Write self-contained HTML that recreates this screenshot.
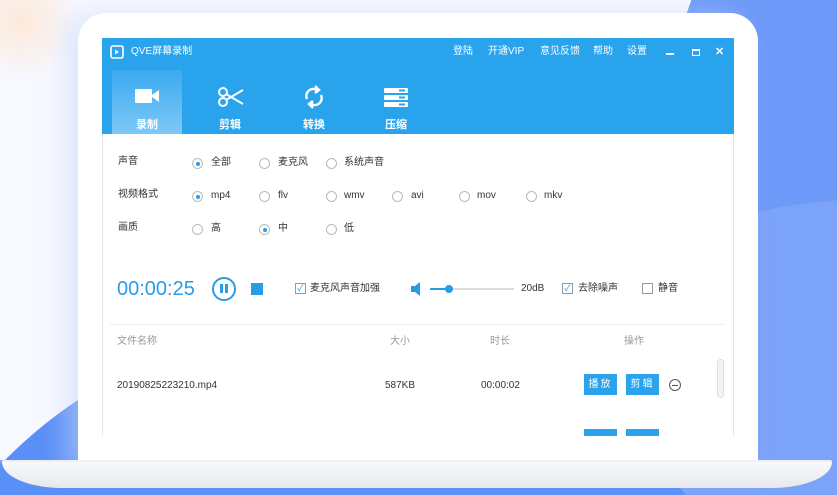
<!DOCTYPE html><html><head><meta charset="utf-8"><style>
*{margin:0;padding:0;box-sizing:border-box}
html,body{width:837px;height:495px;overflow:hidden}
body{font-family:"Liberation Sans","Noto Sans CJK SC",sans-serif}
#w{position:relative;width:837px;height:495px;overflow:hidden;background:#6d99f8}
.a{position:absolute}
.t{position:absolute;font-size:10px;color:#333;white-space:nowrap;line-height:12px}
.r{position:absolute;width:11px;height:11px;border:1px solid #bbb;border-radius:50%;background:#fff}
.r.on::after{content:"";position:absolute;left:2.5px;top:2.5px;width:4px;height:4px;border-radius:50%;background:#2a9be8}
.cb{position:absolute;width:11px;height:11px;border:1px solid #999;background:#fff;font-size:9px;line-height:9px;color:#2a9be8;text-align:center}
.btn{position:absolute;width:33px;height:21px;background:#2aa3ec;color:#fff;font-size:10px;line-height:21px;text-align:center;letter-spacing:2px}
.tab{position:absolute;top:92px;font-size:11px;color:#fff;font-weight:bold}
</style></head><body><div id="w">
<div class="a" style="left:560px;top:200px;width:600px;height:400px;border-radius:50%;background:rgba(255,255,255,0.1)"></div>
<div class="a" style="left:-916px;top:-765px;width:1632px;height:1230px;border-radius:50%;background:#f7f9ff"></div>
<div class="a" style="left:-126px;top:324px;width:912px;height:912px;border-radius:50%;background:#5b8ff8"></div>
<div class="a" style="left:-40px;top:-40px;width:120px;height:120px;border-radius:50%;background:radial-gradient(#fde8d8,rgba(253,232,216,0) 70%)"></div>
<div class="a" style="left:78px;top:13px;width:680px;height:460px;background:#fff;border-radius:28px 28px 0 0;box-shadow:-14px 0 24px rgba(200,215,250,0.5)"></div>
<div class="a" style="left:2px;top:460px;width:830px;height:28px;background:linear-gradient(#f8f9fb,#e6e8ec);border-radius:2px 2px 60px 60px/2px 2px 26px 26px;border-top:2px solid #eef0f4"></div>
<div class="a" style="left:102px;top:38px;width:632px;height:398px;background:#fff;border:1px solid #e6e6e6;border-bottom:none"></div>
<div class="a" style="left:102px;top:38px;width:632px;height:96px;background:#29a3ec"></div>
<div class="a" style="left:112px;top:70px;width:70px;height:64px;background:linear-gradient(#3aaaf0,#7ec8f6)"></div>
<svg class="a" style="left:110px;top:45px" width="14" height="14"><rect x="1" y="1" width="12" height="12" rx="2" fill="none" stroke="#fff" stroke-width="1.6"/><path d="M5 4.5v5l4-2.5z" fill="#fff"/></svg>
<div class="t" style="left:131px;top:46px;color:#fff">QVE屏幕录制</div>
<div class="t" style="left:453px;top:46px;color:#fff">登陆</div>
<div class="t" style="left:488px;top:46px;color:#fff">开通VIP</div>
<div class="t" style="left:540px;top:46px;color:#fff">意见反馈</div>
<div class="t" style="left:593px;top:46px;color:#fff">帮助</div>
<div class="t" style="left:627px;top:46px;color:#fff">设置</div>
<div class="a" style="left:666px;top:53px;width:8px;height:2px;background:#fff"></div>
<div class="a" style="left:692px;top:49px;width:8px;height:7px;border:1.5px solid #fff;border-top-width:2.5px"></div>
<div class="t" style="left:715px;top:46px;color:#fff;font-weight:bold;font-size:11px">✕</div>
<svg class="a" style="left:134px;top:86px" width="28" height="20"><rect x="1" y="3" width="17" height="14" rx="1" fill="#fff"/><path d="M18 9l7-5v12l-7-5z" fill="#fff"/></svg>
<svg class="a" style="left:216px;top:86px" width="30" height="22" fill="none" stroke="#fff" stroke-width="2"><circle cx="7" cy="6" r="4"/><circle cx="7" cy="16" r="4"/><path d="M10 8l17 10M10 14l17-10"/></svg>
<svg class="a" style="left:303px;top:84px" width="22" height="26" fill="none" stroke="#fff" stroke-width="2.4"><path d="M4 15a7 7 0 0 1 10-9"/><path d="M18 11a7 7 0 0 1-10 9"/><path d="M12 2l4 4-4 3" fill="#fff"/><path d="M10 24l-4-4 4-3" fill="#fff"/></svg>
<svg class="a" style="left:383px;top:88px" width="26" height="20"><rect x="1" y="0" width="24" height="5" rx="1" fill="#fff"/><rect x="1" y="7" width="24" height="5" rx="1" fill="#fff"/><rect x="1" y="14" width="24" height="5" rx="1" fill="#fff"/><rect x="16" y="1.5" width="6" height="2" fill="#29a3ec"/><rect x="16" y="8.5" width="6" height="2" fill="#29a3ec"/><rect x="16" y="15.5" width="6" height="2" fill="#29a3ec"/></svg>
<div class="tab" style="left:136px;top:116px">录制</div>
<div class="tab" style="left:219px;top:116px">剪辑</div>
<div class="tab" style="left:303px;top:116px">转换</div>
<div class="tab" style="left:385px;top:116px">压缩</div>

<div class="t" style="left:118px;top:156px">声音</div>
<div class="t" style="left:118px;top:189px">视频格式</div>
<div class="t" style="left:118px;top:222px">画质</div>

<div class="r on" style="left:192px;top:158px"></div><div class="t" style="left:211px;top:157px">全部</div>
<div class="r" style="left:259px;top:158px"></div><div class="t" style="left:278px;top:157px">麦克风</div>
<div class="r" style="left:326px;top:158px"></div><div class="t" style="left:344px;top:157px">系统声音</div>

<div class="r on" style="left:192px;top:191px"></div><div class="t" style="left:211px;top:190px">mp4</div>
<div class="r" style="left:259px;top:191px"></div><div class="t" style="left:278px;top:190px">flv</div>
<div class="r" style="left:326px;top:191px"></div><div class="t" style="left:344px;top:190px">wmv</div>
<div class="r" style="left:392px;top:191px"></div><div class="t" style="left:411px;top:190px">avi</div>
<div class="r" style="left:459px;top:191px"></div><div class="t" style="left:477px;top:190px">mov</div>
<div class="r" style="left:526px;top:191px"></div><div class="t" style="left:544px;top:190px">mkv</div>

<div class="r" style="left:192px;top:224px"></div><div class="t" style="left:211px;top:223px">高</div>
<div class="r on" style="left:259px;top:224px"></div><div class="t" style="left:278px;top:223px">中</div>
<div class="r" style="left:326px;top:224px"></div><div class="t" style="left:344px;top:223px">低</div>

<div class="t" style="left:117px;top:278px;font-size:20px;line-height:22px;color:#2a9be8">00:00:25</div>
<div class="a" style="left:212px;top:277px;width:24px;height:24px;border:2.5px solid #2a9be8;border-radius:50%"></div>
<div class="a" style="left:220px;top:284px;width:2.5px;height:9px;background:#2a9be8"></div>
<div class="a" style="left:225px;top:284px;width:2.5px;height:9px;background:#2a9be8"></div>
<div class="a" style="left:251px;top:283px;width:12px;height:12px;background:#2a9be8"></div>
<div class="cb" style="left:295px;top:283px">✓</div><div class="t" style="left:310px;top:283px">麦克风声音加强</div>
<svg class="a" style="left:410px;top:281px" width="14" height="16"><path d="M1 5h4l5-4v14l-5-4H1z" fill="#2a9be8"/></svg>
<div class="a" style="left:430px;top:288px;width:84px;height:2px;background:#ddd"></div>
<div class="a" style="left:430px;top:288px;width:18px;height:2px;background:#2a9be8"></div>
<div class="a" style="left:445px;top:285px;width:8px;height:8px;border-radius:50%;background:#2a9be8"></div>
<div class="t" style="left:521px;top:283px">20dB</div>
<div class="cb" style="left:562px;top:283px">✓</div><div class="t" style="left:578px;top:283px">去除噪声</div>
<div class="cb" style="left:642px;top:283px"></div><div class="t" style="left:658px;top:283px">静音</div>

<div class="a" style="left:110px;top:324px;width:614px;height:1px;background:#eee"></div>
<div class="t" style="left:117px;top:336px;color:#999">文件名称</div>
<div class="t" style="left:390px;top:336px;color:#999">大小</div>
<div class="t" style="left:490px;top:336px;color:#999">时长</div>
<div class="t" style="left:624px;top:336px;color:#999">操作</div>
<div class="t" style="left:117px;top:380px">20190825223210.mp4</div>
<div class="t" style="left:385px;top:380px">587KB</div>
<div class="t" style="left:481px;top:380px">00:00:02</div>
<div class="btn" style="left:584px;top:374px">播放</div>
<div class="btn" style="left:626px;top:374px">剪辑</div>
<div class="a" style="left:669px;top:379px;width:12px;height:12px;border:1px solid #555;border-radius:50%"></div>
<div class="a" style="left:672px;top:384.5px;width:6px;height:1px;background:#555"></div>
<div class="a" style="left:717px;top:359px;width:7px;height:39px;border:1px solid #ddd;border-radius:4px;background:#f4f4f4"></div>
<div class="btn" style="left:584px;top:429px;height:7px"></div>
<div class="btn" style="left:626px;top:429px;height:7px"></div>
</div></body></html>
